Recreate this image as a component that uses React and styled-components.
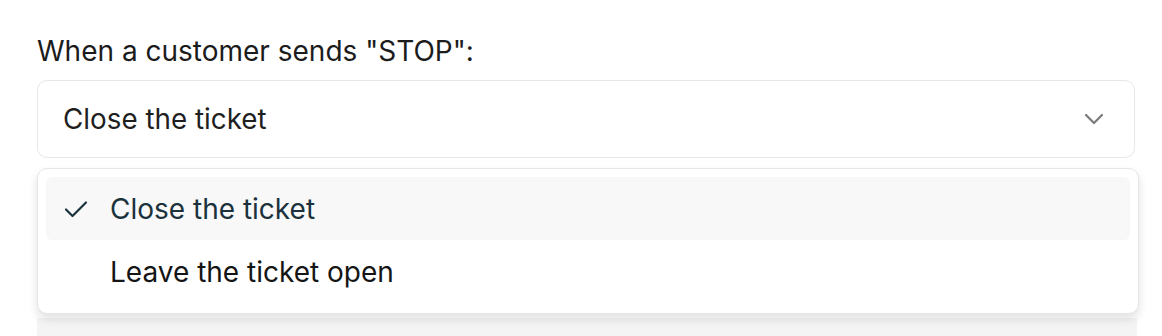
import React from 'react';
import styled, { createGlobalStyle } from 'styled-components';

const GlobalStyle = createGlobalStyle`
  body {
    margin: 0;
    background: #ffffff;
    font-family: Inter, "Noto Sans", "Liberation Sans", sans-serif;
  }
`;

const options = ['Close the ticket', 'Leave the ticket open'];

const Page = styled.div`
  padding: 35px 27px 0 37px;
  height: 336px;
  box-sizing: border-box;
  overflow: hidden;
`;

const Label = styled.div`
  font-size: 28px;
  line-height: 32px;
  color: #1c1c1c;
`;

const Field = styled.div`
  position: relative;
  margin-top: 13px;
`;

const Trigger = styled.div`
  display: flex;
  align-items: center;
  justify-content: space-between;
  height: 78px;
  box-sizing: border-box;
  padding: 0 30px 0 25px;
  border: 1.5px solid #e7e7e7;
  border-radius: 10px;
  font-size: 27.8px;
  color: #1f1f1f;
`;

const Menu = styled.div`
  position: absolute;
  top: 88px;
  left: 0;
  right: -4px;
  box-sizing: border-box;
  padding: 8px 8px 10px;
  background: #ffffff;
  border: 1px solid #e6e6e6;
  border-radius: 10px;
  box-shadow: 0 5px 10px rgba(0, 0, 0, 0.12);
  z-index: 2;
`;

const Item = styled.div`
  display: flex;
  align-items: center;
  gap: 22px;
  height: 63px;
  padding-left: 18px;
  border-radius: 6px;
  font-size: 28px;
  background: ${p => (p.selected ? '#f8f8f8' : 'transparent')};
  color: ${p => (p.selected ? '#1b323c' : '#151515')};
`;

const CheckSlot = styled.span`
  display: flex;
  width: 24px;
  justify-content: center;
`;

const Below = styled.div`
  margin-top: 160px;
  height: 40px;
  margin-right: -2px;
  background: #f4f4f4;
`;

const Chevron = () => (
  <svg width="20" height="12" viewBox="0 0 20 12" fill="none">
    <path d="M2 2l8 8 8-8" stroke="#7a7a7a" strokeWidth="2.2" strokeLinecap="round" strokeLinejoin="round" />
  </svg>
);

const Check = () => (
  <svg width="24" height="18" viewBox="0 0 24 18" fill="none">
    <path d="M2 9.5l6.5 6.5L22 2.5" stroke="#1b323c" strokeWidth="2.2" strokeLinecap="round" strokeLinejoin="round" />
  </svg>
);

const App = () => {
  const selected = options[0];
  return (
    <Page>
      <GlobalStyle />
      <Label>When a customer sends "STOP":</Label>
      <Field>
        <Trigger>
          <span>{selected}</span>
          <Chevron />
        </Trigger>
        <Menu>
          {options.map(opt => (
            <Item key={opt} selected={opt === selected}>
              <CheckSlot>{opt === selected && <Check />}</CheckSlot>
              <span>{opt}</span>
            </Item>
          ))}
        </Menu>
      </Field>
      <Below />
    </Page>
  );
};

export default App;
